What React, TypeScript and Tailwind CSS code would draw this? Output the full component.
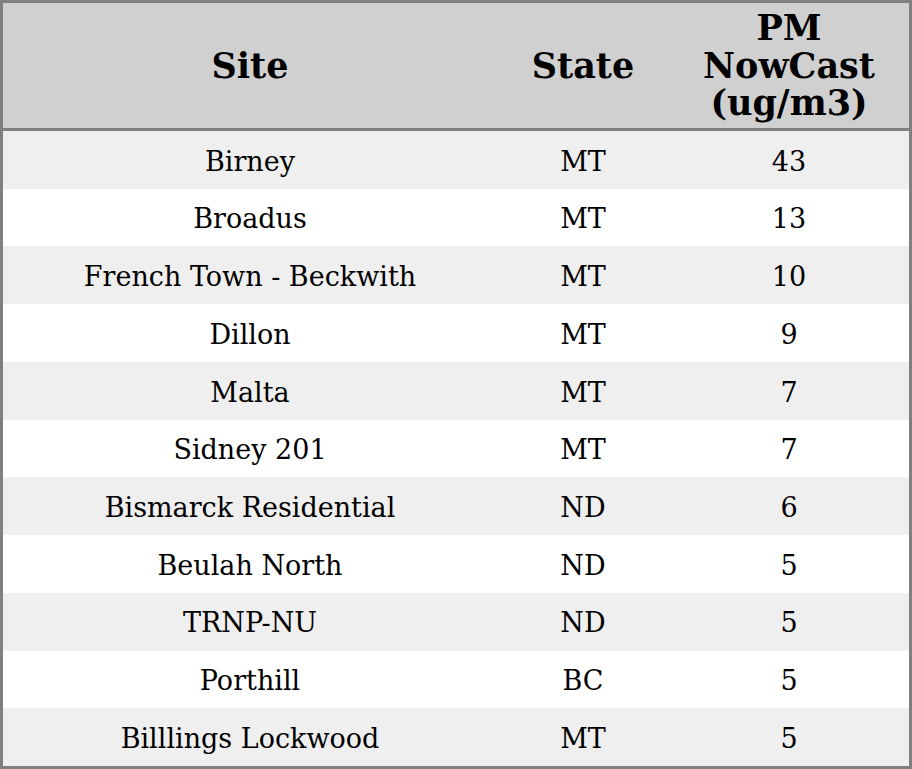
const rows: [string, string, number][] = [
  ["Birney", "MT", 43],
  ["Broadus", "MT", 13],
  ["French Town - Beckwith", "MT", 10],
  ["Dillon", "MT", 9],
  ["Malta", "MT", 7],
  ["Sidney 201", "MT", 7],
  ["Bismarck Residential", "ND", 6],
  ["Beulah North", "ND", 5],
  ["TRNP-NU", "ND", 5],
  ["Porthill", "BC", 5],
  ["Billlings Lockwood", "MT", 5],
];

export default function App() {
  return (
    <div className="w-[912px] h-[769px] bg-white font-['DejaVu_Serif',serif] text-black">
      <div className="flex h-full flex-col border-[3px] border-[#808080]">
        <div className="flex h-[128px] shrink-0 items-center border-b-[3px] border-[#808080] bg-[#d0d0d0] text-[35px] font-bold leading-[37.5px]">
          <div className="w-[494px] text-center">Site</div>
          <div className="w-[172px] text-center">State</div>
          <div className="flex-1 text-center">
            PM
            <br />
            NowCast
            <br />
            (ug/m3)
          </div>
        </div>
        <div className="flex flex-1 flex-col text-[27px]">
          {rows.map(([site, state, value], i) => (
            <div
              key={site}
              className={`flex flex-1 items-center pt-1 ${i % 2 === 0 ? "bg-[#efefef]" : "bg-white"}`}
            >
              <div className="w-[494px] text-center">{site}</div>
              <div className="w-[172px] text-center">{state}</div>
              <div className="flex-1 text-center">{value}</div>
            </div>
          ))}
        </div>
      </div>
    </div>
  );
}
